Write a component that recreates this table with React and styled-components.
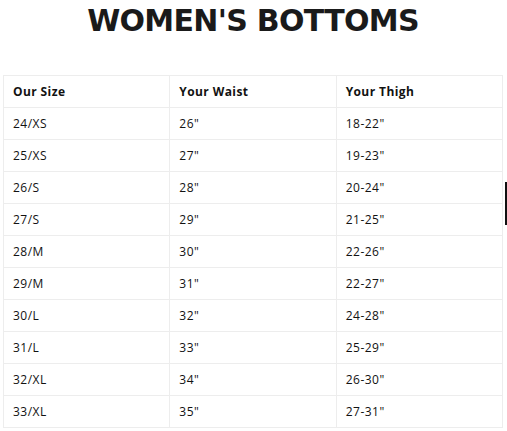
import React from "react";
import styled, { createGlobalStyle } from "styled-components";

const rows = [
  ["24/XS", "26\"", "18-22\""],
  ["25/XS", "27\"", "19-23\""],
  ["26/S", "28\"", "20-24\""],
  ["27/S", "29\"", "21-25\""],
  ["28/M", "30\"", "22-26\""],
  ["29/M", "31\"", "22-27\""],
  ["30/L", "32\"", "24-28\""],
  ["31/L", "33\"", "25-29\""],
  ["32/XL", "34\"", "26-30\""],
  ["33/XL", "35\"", "27-31\""],
];

const App = () => {
  return (
    <>
      <GlobalStyle />
      <Page>
        <Title>WOMEN'S BOTTOMS</Title>
        <SizeTable>
          <thead>
            <tr>
              <HeadCell>Our Size</HeadCell>
              <HeadCell>Your Waist</HeadCell>
              <HeadCell>Your Thigh</HeadCell>
            </tr>
          </thead>
          <tbody>
            {rows.map((row) => (
              <tr key={row[0]}>
                {row.map((value, i) => (
                  <Cell key={i}>{value}</Cell>
                ))}
              </tr>
            ))}
          </tbody>
        </SizeTable>
        <ScrollMark />
      </Page>
    </>
  );
};

export default App;

const GlobalStyle = createGlobalStyle`
  body {
    margin: 0;
    background: #fff;
    font-family: "Open Sans", Arial, sans-serif;
    color: #121212;
  }
`;

const Page = styled.div`
  position: relative;
  width: 507px;
  height: 431px;
  padding: 0 4px 0 3px;
  box-sizing: border-box;
  overflow: hidden;
`;

const Title = styled.h1`
  margin: 0;
  padding-top: 2px;
  height: 73px;
  text-align: center;
  font-family: "DejaVu Sans", sans-serif;
  font-size: 30px;
  font-weight: 700;
  line-height: 38px;
  letter-spacing: -0.7px;
  color: #1a1a1a;
`;

const SizeTable = styled.table`
  width: 500px;
  border-collapse: collapse;
  table-layout: fixed;
`;

const HeadCell = styled.th`
  height: 32px;
  padding: 0 0 0 9px;
  box-sizing: border-box;
  border: 1px solid #ededed;
  text-align: left;
  font-size: 12px;
  font-weight: 700;
  letter-spacing: 0.4px;
`;

const Cell = styled.td`
  height: 32px;
  padding: 0 0 0 9px;
  box-sizing: border-box;
  border: 1px solid #ededed;
  font-size: 12px;
  font-weight: 400;
  letter-spacing: 0.5px;
`;

const ScrollMark = styled.div`
  position: absolute;
  right: 0;
  top: 182px;
  width: 2px;
  height: 43px;
  background: #111;
`;
